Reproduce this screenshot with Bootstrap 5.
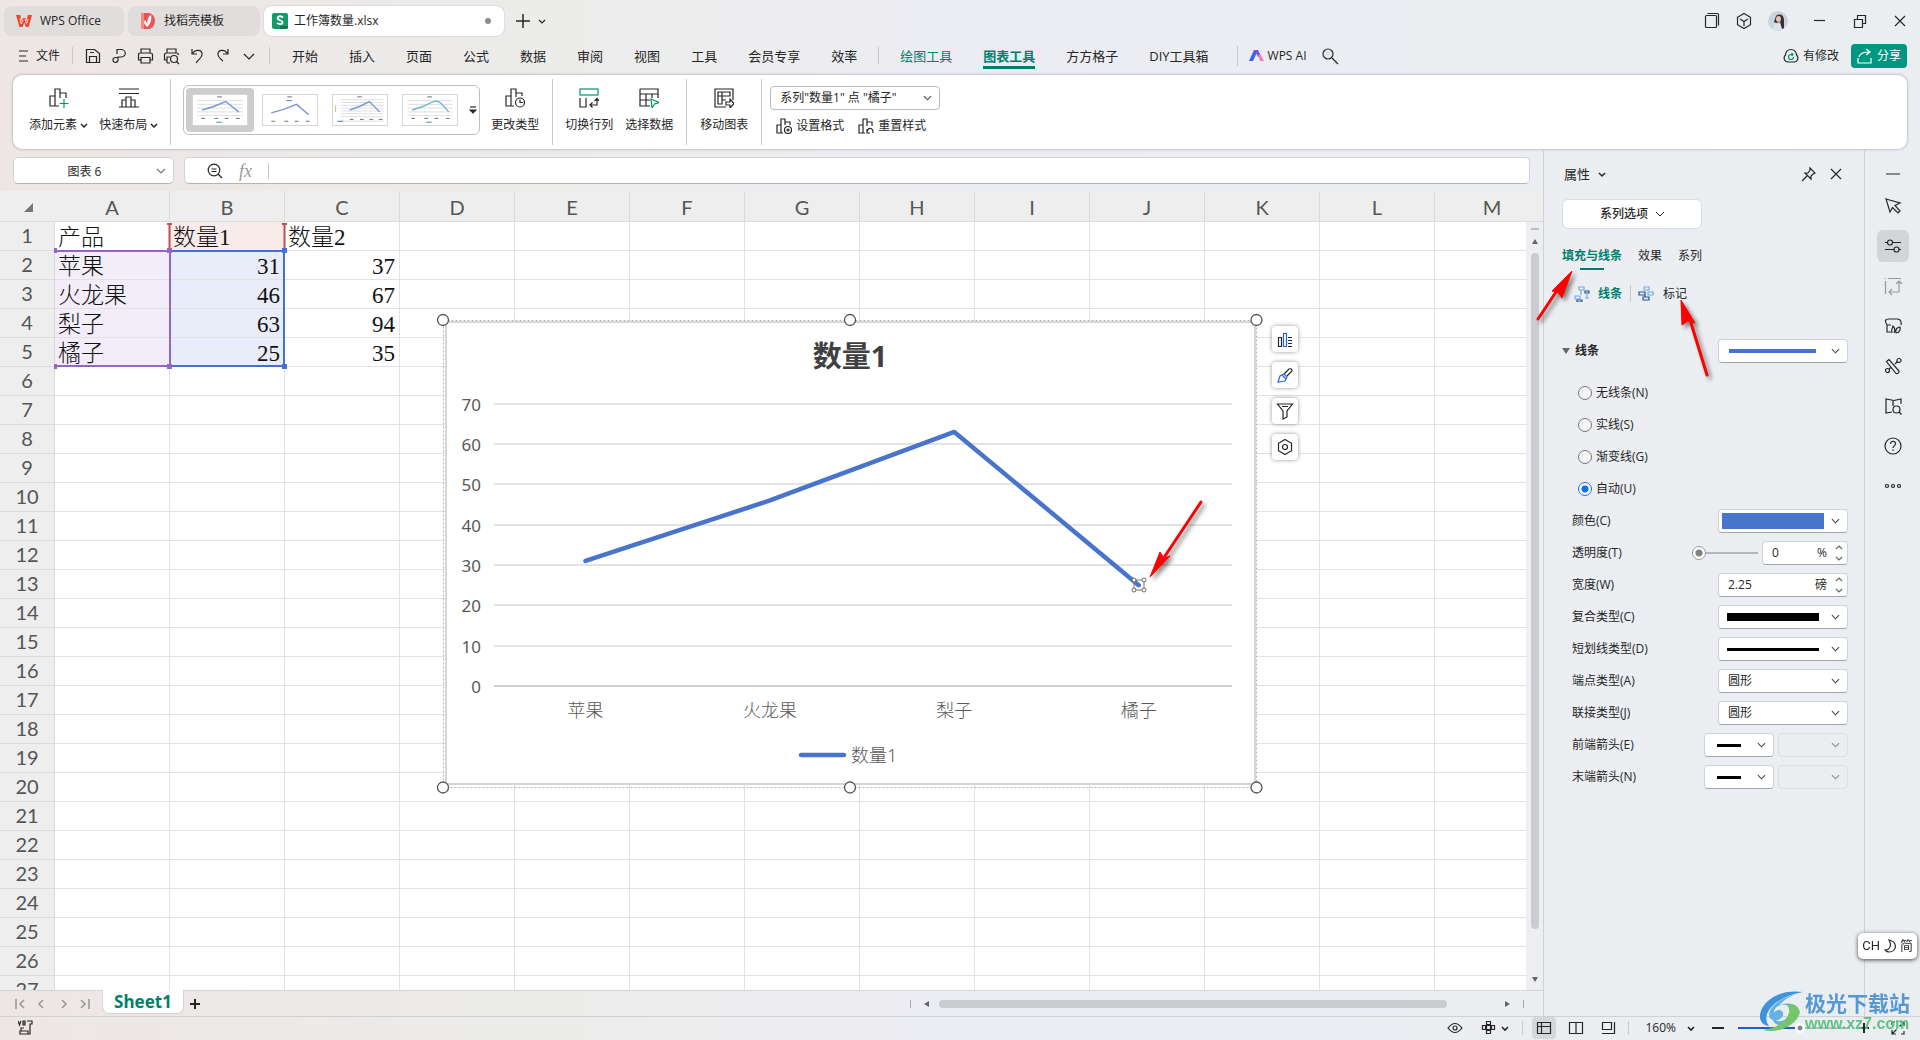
<!DOCTYPE html>
<html lang="zh-CN">
<head>
<meta charset="utf-8">
<meta name="viewport" content="width=device-width, initial-scale=1">
<title>工作簿数量.xlsx - WPS Office</title>
<link rel="stylesheet" href="https://cdn.jsdelivr.net/npm/bootstrap@5.3.0/dist/css/bootstrap.min.css">
<style>
:root{--teal:#007f6d;--blue:#4874cb;--ink:#262626;--line:#cfd1d5}
html{overflow:hidden}
body{font-family:"Open Sans","Noto Sans CJK SC",sans-serif;font-size:12px;line-height:16px;color:var(--ink);
 background:linear-gradient(90deg,#ede6e5 0,#ececea 28%,#ecedf3 50%,#ebeef1 100%)}
button,select,input{font:inherit;color:inherit}
.plain{border:0;background:none;padding:0}
a{color:inherit;text-decoration:none}
svg.ic{width:20px;height:20px;fill:none;stroke:currentColor;stroke-width:1.2;flex:none;display:block}
svg.sm{width:16px;height:16px}
svg.tiny{width:8px;height:8px}
.g{stroke:#00936f}
.titlebar{height:41px;padding-left:4px}
.doctab{height:30px;border-radius:8px;background:#e0dddc;padding:0 12px;gap:8px}
.doctab.on{background:#fff;box-shadow:0 0 2px #bbb}
.menurow{height:34px;padding:0 13px 5px 18px}
.vsep{width:1px;background:#c9c9cc;flex:none}
.menu a{font-size:13px;line-height:20px}
.menu a.cur{color:var(--teal);font-weight:700;box-shadow:0 3px 0 var(--teal)}
.ribbon{height:74px;margin:0 13px;background:#fff;border-radius:9px;box-shadow:0 0 3px #9a9a9f;padding:4px 0}
.rb{display:flex;flex-direction:column;align-items:center;gap:9px;padding-top:9px;white-space:nowrap}
.gallery{border:1px solid #bfbfbf;border-radius:6px;height:50px;margin-top:6px;padding:2px}
.thumb{width:68px;height:44px;border-radius:4px;padding:6px;margin-right:2px}
.thumb.on{background:#cdcdcd}
.thumb svg{width:56px;height:32px;display:block;background:#fff;border:1px solid #d5d5d5}
.ctl{background:#fff;border:1px solid #cfd1d4;border-bottom-color:#a2a4a8;border-radius:4px;height:24px}
select.ctl{appearance:none;padding:0 22px 0 9px;outline:0;
 --chev:url("data:image/svg+xml,%3Csvg xmlns='http://www.w3.org/2000/svg' viewBox='0 0 10 6'%3E%3Cpath d='M1 1l4 4 4-4' fill='none' stroke='%23444' stroke-width='1.200'/%3E%3C/svg%3E");
 background-image:var(--chev);background-repeat:no-repeat;background-position:right 7px center;background-size:9px 6px;width:130px}
select.bar{background-image:var(--chev),linear-gradient(var(--c),var(--c));background-position:right 7px center,var(--x) center;background-size:9px 6px,var(--s)}
select.half{width:70px}
select.ctl:disabled{background-color:#ebedf0;border-color:#d3d5d8;opacity:.6}
.fbar{height:42px;padding:8px 13px 7px}
.fbox{height:27px;background:#fff;border:1px solid #d3d3d5;border-bottom-color:#b3b3b5;border-radius:5px}
.sheet{min-width:0;background:#fff}
.grid{table-layout:fixed;width:1550px;border-collapse:separate;border-spacing:0}
.grid th{background:#eee;color:#555;font:400 20px/24px Lato,sans-serif;text-align:center;padding:0 0 3px;border:solid #dcdcdc;border-width:0 1px 1px 0;height:29px}
.grid thead th{height:31px;line-height:28px;padding:2px 0 0}
.grid td{height:29px;padding:3px 4px 0 3px;border:solid #e2e2e2;border-width:0 1px 1px 0;font:300 23px/25px "Liberation Serif","Noto Sans CJK SC",serif;color:#111;white-space:nowrap}
.grid .p{background:#f2edf8}.grid .b{background:#e8edf9}.grid .r{background:#f8ebea}
.grid .num{text-align:right}
.over{position:absolute;overflow:visible;pointer-events:none}
.chart{position:absolute;left:436px;top:122px}
.chart text{font-family:"Noto Sans","Noto Sans CJK SC",sans-serif;font-size:17px;fill:#595959}
.chart .cat{font-size:18px;font-weight:300}
.sidebtns{position:absolute;left:1272px;top:135px;gap:10px}
.sidebtns button{width:26px;height:26px;border:0;border-radius:4px;background:#fff;box-shadow:0 0 4px #999;padding:3px}
.vscroll{width:17px;background:#eceef2}
.vscroll .cap{height:31px;background:#eee;border-bottom:1px solid #dcdcdc}
.tabbar{height:26px;border-top:1px solid #d4d5d8}
.sheettab{width:82px;height:24px;margin-top:-1px;background:#fff;border:1px solid #d4d4d6;border-top:0;border-radius:0 0 7px 7px;color:var(--teal);font:700 17px/24px "Noto Sans",sans-serif}
.thumbbar{background:#cbccd0;border-radius:4px}
.status{height:24px;border-top:1px solid var(--line);padding:0 14px 2px}
.pane{width:321px;flex:none;border-left:1px solid var(--line);padding:0 16px 0 18px}
.strip{width:56px;flex:none;border-left:1px solid var(--line)}
.strip button{width:32px;height:32px;border-radius:6px;padding:6px;margin-bottom:8px}
.strip .on{background:#d2d5d8}
.ptabs{gap:16px;height:24px}
.ptabs .on,.teal{color:var(--teal);font-weight:700}
.ptabs .on::after{content:"";display:block;width:24px;height:2px;background:var(--teal);margin:4px auto 0}
.prow{height:32px;padding-left:10px}
.rad{appearance:none;width:14px;height:14px;border:1px solid #777;border-radius:50%;margin:0 4px 0 0;background:#f4f5f7}
.rad:checked{border:1px solid #0d6efd;background:radial-gradient(circle,#0d6efd 3px,#fff 4px)}
.spin input{border:0;outline:0;background:none;padding:0;width:60px}
.rng{appearance:none;height:14px;margin:0;background:linear-gradient(#b3b5b8,#b3b5b8) center/100% 2px no-repeat}
.rng::-webkit-slider-thumb{appearance:none;width:14px;height:14px;border-radius:50%;border:1px solid #999;background:radial-gradient(circle,#808080 3px,#fff 4px)}
.zoomr{width:112px;background:linear-gradient(90deg,#1e5fc8 56%,#b9bbbf 56%) center/100% 2px no-repeat}
.zoomr::-webkit-slider-thumb{width:10px;height:10px;border:0;background:radial-gradient(circle,#888 2px,#fff 3px)}
.ime{position:fixed;right:3px;bottom:81px;height:26px;padding:0 4px;background:#fff;border-radius:5px;box-shadow:0 1px 4px #444;font:13px/26px Roboto,"Noto Sans CJK SC",sans-serif}
.wmark{position:fixed;right:10px;bottom:7px;pointer-events:none;z-index:5}
.wmark .cn{font:700 21px/26px "Noto Sans CJK SC",sans-serif;color:#5598d6}
.wmark .en{font:700 16px/18px "Liberation Sans",sans-serif;color:#5ec584}
</style>
<script src="https://cdn.jsdelivr.net/npm/bootstrap@5.3.0/dist/js/bootstrap.bundle.min.js"></script>
</head>
<body>
<div class="d-flex flex-column vh-100 overflow-hidden">

<header class="titlebar d-flex align-items-center flex-shrink-0">
 <button class="plain doctab d-flex align-items-center me-1" style="width:120px"><svg class="ic sm" viewBox="0 0 16 16" style="stroke:none"><path d="M0 2h4.400l1 6 2-3h2l1 3 1.500-6H16l-3.400 12H10L8.300 9.500 6.500 14H3.500z" fill="#f0432c"/><path d="M4 5l1.200 6 2-4M9 6l1.600 4.500L12 6" fill="none" stroke="#fff" stroke-width=".8"/></svg>WPS Office</button>
 <button class="plain doctab d-flex align-items-center me-1" style="width:132px"><svg class="ic sm" viewBox="0 0 16 16" style="stroke:none"><path d="M1 0h7a7 8 0 0 1 0 16H1z" fill="#ee5354"/><path d="M1 0h3v16H1z" fill="#f58a85"/><path d="M7.500 14C3 11 4 8 5 7l2.500 4C7 6 9 3 11 2c1 4 0 8-3.500 12z" fill="#fff"/></svg>找稻壳模板</button>
 <button class="plain doctab on d-flex align-items-center" style="width:240px;padding:0 12px 0 8px;gap:6px"><svg class="ic sm" viewBox="0 0 16 16" style="stroke:none"><rect width="16" height="16" rx="2" fill="#109c68"/><path d="M8 13h8v1a2 2 0 0 1-2 2H8z" fill="#0b7a4e"/><path d="M11 4.500C9 2.500 5.500 3 5.600 5.400c.1 2.300 5 1.600 5 3.900 0 2.200-3.500 2.500-5.600.6" fill="none" stroke="#fff" stroke-width="1.800"/></svg>工作簿数量.xlsx<svg class="ms-auto tiny" viewBox="0 0 8 8"><circle cx="4" cy="4" r="3" fill="#8b8b8b"/></svg></button>
 <button class="plain ms-2 ps-1" aria-label="新建"><svg class="ic" style="width:14px;height:14px;stroke-width:1.500" viewBox="0 0 14 14"><path d="M7 0v14M0 7h14"/></svg></button>
 <button class="plain ms-2" aria-label="标签列表"><svg class="ic tiny" viewBox="0 0 8 8"><path d="M1 3l3 3 3-3"/></svg></button>
 <div class="d-flex align-items-center ms-auto" style="padding-right:12px">
  <button class="plain" aria-label="窗口"><svg class="ic" viewBox="0 0 20 20"><path d="M4.500 4.500h9q1 0 1 1v10q0 1-1 1h-9q-1 0-1-1v-10q0-1 1-1zM5.500 2.500h10q1 0 1 1v11"/></svg></button>
  <button class="plain" style="margin:0 14px 0 12px" aria-label="应用"><svg class="ic" viewBox="0 0 20 20"><path d="M10 2.500l6.500 3.800v7.400L10 17.500l-6.500-3.800V6.300zM6 8l4 2.500L14 8M10 10.500V15"/></svg></button>
  <svg class="ic" viewBox="0 0 20 20" style="stroke:none"><circle cx="10" cy="10" r="10" fill="#c9d5da"/><path d="M8 5c4-3 8-1 8 4l0 8-2 1-2-7-4 1-2-1z" fill="#3a2d37"/><ellipse cx="10.500" cy="8" rx="2.500" ry="3" fill="#e6bfb2"/><path d="M4 19l3-7 5 1 2 6z" fill="#dbe6ea"/></svg>
  <button class="plain" style="margin:0 22px 0 24px" aria-label="最小化"><svg class="ic sm" viewBox="0 0 16 16"><path d="M2 7.500h11"/></svg></button>
  <button class="plain" aria-label="还原"><svg class="ic" viewBox="0 0 20 20"><path d="M4.500 8.500h8v8h-8zM7.500 8V4.500h8v8h-3"/></svg></button>
  <button class="plain" style="margin-left:22px" aria-label="关闭"><svg class="ic sm" viewBox="0 0 16 16"><path d="M3 3l10 10M13 3L3 13"/></svg></button>
 </div>
</header>

<nav class="menurow d-flex align-items-center flex-shrink-0">
 <button class="plain d-flex align-items-center gap-2"><svg class="ic" style="width:10px;height:12px" viewBox="0 0 10 12"><path d="M1 1h9M1 6h7M1 11h9"/></svg>文件</button>
 <span class="vsep" style="height:17px;margin:0 10px 0 12px"></span>
 <div class="d-flex" style="gap:6px">
  <button class="plain" aria-label="保存"><svg class="ic" viewBox="0 0 20 20"><path d="M3.500 3.500h8l5 4v9h-13zM6.500 16v-5.500h7V16M7 6.500h4"/></svg></button>
  <button class="plain" aria-label="输出PDF"><svg class="ic" viewBox="0 0 20 20"><path d="M8 8V3.500h4a4 3.500 0 0 1 0 7.500H9V14a2.500 2.500 0 1 1-3-2.500h3"/></svg></button>
  <button class="plain" aria-label="打印"><svg class="ic" viewBox="0 0 20 20"><path d="M6 7V3h9v4M6 14H3.500V9q0-2 2-2h10q2 0 2 2v5H15M6 11.500h9V17H6z"/></svg></button>
  <button class="plain" aria-label="打印预览"><svg class="ic" viewBox="0 0 20 20"><path d="M6 7V3h9v4M6 14H3.500V9q0-2 2-2h10q2 0 2 2M6 17v-6h3M6 17h3"/><circle cx="13" cy="13" r="3.500"/><path d="M15.500 15.500L18 18"/></svg></button>
  <button class="plain" aria-label="撤销"><svg class="ic" viewBox="0 0 20 20"><path d="M5 3v5h5M5 8c4-6 11-4 10 1-.5 3-4 5-6 8"/></svg></button>
  <button class="plain" aria-label="恢复"><svg class="ic" viewBox="0 0 20 20"><path d="M15 3v5h-5M15 8C11 2 4 4 5 9c.5 3 3 4 5 6"/></svg></button>
  <button class="plain" aria-label="更多"><svg class="ic" viewBox="0 0 20 20"><path d="M5 8l5 5 5-5"/></svg></button>
 </div>
 <span class="vsep" style="height:17px;margin:0 22px 0 10px"></span>
 <div class="menu d-flex align-items-center" style="gap:31px">
  <a href="#">开始</a><a href="#">插入</a><a href="#">页面</a><a href="#">公式</a><a href="#">数据</a><a href="#">审阅</a><a href="#">视图</a><a href="#">工具</a><a href="#">会员专享</a><a href="#">效率</a>
 </div>
 <span class="vsep" style="height:17px;margin:0 21px"></span>
 <div class="menu d-flex align-items-center" style="gap:31px">
  <a href="#" style="color:var(--teal)">绘图工具</a><a href="#" class="cur">图表工具</a><a href="#">方方格子</a><a href="#">DIY工具箱</a>
 </div>
 <span class="vsep" style="height:20px;margin:0 10px 0 28px"></span>
 <button class="plain d-flex align-items-center gap-1"><svg class="ic sm" viewBox="0 0 16 16" style="stroke:none"><path d="M6 2h4L5 13H1z" fill="#3c62f4"/><path d="M6 2h4l3 6-3 1-2-4z" fill="#7b4df0"/><path d="M10 7l3 0 3 6h-4z" fill="#f77bb5"/></svg>WPS AI</button>
 <button class="plain" style="margin-left:13px" aria-label="搜索"><svg class="ic" viewBox="0 0 20 20"><circle cx="8" cy="8" r="5"/><path d="M12 12l6 6"/></svg></button>
 <button class="plain d-flex align-items-center gap-1 ms-auto me-2"><svg class="ic sm" viewBox="0 0 16 16"><path d="M5 14a4 4 0 0 1-2.500-7A5.500 5.500 0 0 1 13.500 7 4 4 0 0 1 11 14z"/><path class="g" d="M10.500 9A2.500 2.500 0 1 1 8 6.500h2M8.500 5L10 6.500 8.500 8"/></svg>有修改</button>
 <button class="plain d-flex align-items-center gap-1 text-white ms-1" style="background:#009781;border-radius:4px;height:24px;width:56px;padding:0 6px"><svg class="ic sm" viewBox="0 0 16 16"><path d="M2 9c1-4 4-5 10-5M9 1l4 3-4 3M1 10v5h13v-5"/></svg>分享</button>
</nav>

<section class="ribbon d-flex flex-shrink-0">
 <button class="plain rb" style="margin-left:16px"><svg class="ic" viewBox="0 0 20 20"><path d="M1 18V8h5v10zM6 8V1h5v9M11 5h6v5M6 18h4"/><path class="g" d="M15 11v9M10.500 15.500h9"/></svg><span>添加元素 <svg class="ic tiny d-inline" viewBox="0 0 8 8" style="stroke-width:1.500"><path d="M1 2l3 3 3-3"/></svg></span></button>
 <button class="plain rb" style="margin-left:11px"><svg class="ic" viewBox="0 0 20 20"><path d="M0 1h20M0 5.500h20M0 19h20M3 19v-7h4v7M7 15V9h5v10M12 12h4v7"/></svg><span>快速布局 <svg class="ic tiny d-inline" viewBox="0 0 8 8" style="stroke-width:1.500"><path d="M1 2l3 3 3-3"/></svg></span></button>
 <span class="vsep" style="margin:0 12px"></span>
 <div class="gallery d-flex">
  <button class="plain thumb on" aria-label="样式 1"><svg viewBox="0 0 56 32"><path d="M4 6h48M4 10h48M4 14h48M4 18h48M4 22h48" stroke="#ddd"/><path d="M9 16l13-4 12-5 14 11" fill="none" stroke="#7b96d8" stroke-width="1.500"/><path d="M25 2h5M8 25h4M22 25h4M33 25h4M45 25h4" stroke="#666"/><path d="M24 29h6" stroke="#4874cb"/></svg></button>
  <button class="plain thumb" aria-label="样式 2"><svg viewBox="0 0 56 32"><path d="M8 19l14-4 13-5 13 11" fill="none" stroke="#7b96d8" stroke-width="1.500"/><path d="M25 2h5M8 28h4M22 28h4M33 28h4M45 28h4" stroke="#666"/><path d="M24 6h6" stroke="#4874cb"/></svg></button>
  <button class="plain thumb" aria-label="样式 3"><svg viewBox="0 0 56 32"><path d="M8 5h45M8 8h45M8 11h45M8 14h45M8 17h45M8 20h45M8 23h45M3 28h50" stroke="#ddd"/><path d="M17 16l11-4 10-5 11 11" fill="none" stroke="#7b96d8" stroke-width="1.500"/><path d="M25 2h5M17 26h4M28 26h4M38 26h4M48 26h4" stroke="#666"/><path d="M2 11v7" stroke="#ca8"/><path d="M4 28h6" stroke="#4874cb"/></svg></button>
  <button class="plain thumb" aria-label="样式 4"><svg viewBox="0 0 56 32"><path d="M4 6h48M4 10h48M4 14h48M4 18h48M4 22h48" stroke="#ddd"/><path d="M9 16l12-4C30 8 34 4 40 9l8 9" fill="none" stroke="#73b5d4" stroke-width="1.500"/><path d="M25 2h5M8 25h4M22 25h4M33 25h4M45 25h4" stroke="#666"/><path d="M24 29h6" stroke="#4874cb"/></svg></button>
  <button class="plain" style="margin-left:3px" aria-label="更多样式"><svg class="ic tiny" viewBox="0 0 8 8"><path d="M1 1h6"/><path d="M1 4h6L4 7z" fill="#333"/></svg></button>
 </div>
 <button class="plain rb" style="margin-left:11px"><svg class="ic" viewBox="0 0 20 20"><path d="M1 18V8h5v10zM6 8V1h5v8M11 5h6v3M6 18h3"/><circle cx="15" cy="14.500" r="4.500"/><path d="M15 11.500v3h3"/></svg>更改类型</button>
 <span class="vsep" style="margin:0 12px 0 13px"></span>
 <button class="plain rb"><svg class="ic" viewBox="0 0 20 20"><rect class="g" x="1" y="1" width="18" height="6"/><path d="M1 10v9h6v-9M11 17h7v-6M13.500 14.500L11 17l2.500 2.500M15.500 13L18 10.500l2 2.500"/></svg>切换行列</button>
 <button class="plain rb" style="margin-left:12px"><svg class="ic" viewBox="0 0 20 20"><path d="M1 1h18v9M1 1v17h10M1 6h18M1 12h10M7 6v12M13 6v4"/><path class="g" d="M12 11l8 3.500-4.500 1.500L13 20z"/></svg>选择数据</button>
 <span class="vsep" style="margin:0 13px"></span>
 <button class="plain rb"><svg class="ic" viewBox="0 0 20 20"><path d="M19 12V1H1v18h11M4 4h12v4H8v8H4zM8 4v4H4M8 12h4"/><path d="M12 14h4v-3l4 4.500-4 4.500v-3h-4z"/></svg>移动图表</button>
 <span class="vsep" style="margin:0 8px 0 13px"></span>
 <div class="d-flex flex-column" style="padding-top:7px;gap:8px">
  <select class="ctl" style="width:170px;border-color:#bbb" aria-label="图表元素"><option>系列"数量1" 点 "橘子"</option></select>
  <div class="d-flex" style="gap:14px;padding-left:6px">
   <button class="plain d-flex align-items-center gap-1"><svg class="ic sm" viewBox="0 0 16 16"><path d="M1 15V7h4v8zM5 7V1h4v6M9 4h5v3M5 15h2"/><circle cx="12" cy="12" r="3.500"/><circle cx="12" cy="12" r="1"/></svg>设置格式</button>
   <button class="plain d-flex align-items-center gap-1"><svg class="ic sm" viewBox="0 0 16 16"><path d="M1 15V7h4v8zM5 7V1h4v7M9 4h5v4M5 15h2M9 14c1-5 6-5 6 1M9 11v4h3"/></svg>重置样式</button>
  </div>
 </div>
</section>

<main class="d-flex flex-grow-1" style="min-height:0">
 <div class="d-flex flex-column flex-grow-1" style="min-width:0">
  <div class="fbar d-flex flex-shrink-0" style="gap:10px">
   <div class="fbox position-relative flex-shrink-0" style="width:161px"><input aria-label="名称框" class="plain w-100 h-100 text-center" style="padding-right:18px" value="图表 6"><svg class="ic tiny over" style="right:7px;top:9px;width:10px" viewBox="0 0 10 8"><path d="M1 2l4 4 4-4" stroke="#777"/></svg></div>
   <div class="fbox d-flex align-items-center flex-grow-1" style="padding-left:22px;gap:16px"><svg class="ic sm" viewBox="0 0 16 16"><circle cx="7" cy="7" r="5.800"/><path d="M11 11l4 4M4.500 6h5M4.500 8.500h5"/></svg><i style="color:#999;font:italic 18px/20px 'Liberation Serif',serif">fx</i><span class="vsep" style="height:16px"></span><input class="plain flex-grow-1" aria-label="编辑栏"></div>
  </div>
  <div class="d-flex flex-grow-1" style="min-height:0">
   <div class="sheet position-relative overflow-hidden flex-grow-1">
    <table class="grid" id="grid"><colgroup><col style="width:55px"></colgroup><thead></thead><tbody></tbody></table>
    <svg class="over" style="left:0;top:0" width="420" height="200" fill="none" stroke-width="2">
     <path d="M24 21l9-9v9z" fill="#777"/>
     <g stroke="#c0504d"><path d="M169.500 59V32M284.500 59V32M167 33h5M282 33h5"/></g>
     <path d="M172 60h112v115H172" stroke="#4470d2"/><path d="M55 60h115v115H55" stroke="#9565c0"/>
     <path d="M54 57h3v5h-3zM54 173h3v5h-3zM167 57h5v5h-5zM167 173h5v5h-5z" fill="#9565c0"/><path d="M282 57h5v5h-5zM282 173h5v5h-5z" fill="#4470d2"/>
    </svg>
    <svg class="chart" width="828" height="484" role="img" aria-label="数量1 折线图">
     <rect x="10" y="9" width="809" height="462" fill="#fff" stroke="#d5d5d5" stroke-width="2"/>
     <rect x="7.500" y="7.500" width="813" height="467" fill="none" stroke="#b5b5b5" stroke-dasharray="2 2"/>
     <g id="plot"></g>
     <text x="414" y="54" text-anchor="middle" style="font-size:29px;font-weight:700;fill:#404040">数量1</text>
     <path d="M365 442h43" stroke="#4874cb" stroke-width="4.500" stroke-linecap="round"/><text x="415" y="449" class="cat">数量1</text>
     <g fill="#fff" stroke="#555" stroke-width="1.300"><circle cx="7" cy="7" r="5.500"/><circle cx="414" cy="7" r="5.500"/><circle cx="820.500" cy="7" r="5.500"/><circle cx="7" cy="474.500" r="5.500"/><circle cx="414" cy="474.500" r="5.500"/><circle cx="820.500" cy="474.500" r="5.500"/></g>
     <rect x="698" y="267" width="10" height="10" fill="none" stroke="#777"/><g fill="#fff" stroke="#666"><circle cx="698" cy="267" r="2"/><circle cx="708" cy="267" r="2"/><circle cx="698" cy="277" r="2"/><circle cx="708" cy="277" r="2"/></g>
     <g style="filter:drop-shadow(3px 3px 2px #0007)"><path d="M765 189L729 243" stroke="#f00" stroke-width="3" stroke-linecap="round"/><path d="M714 264L724 239 728 245 734 243z" fill="#f00" stroke="#f00"/></g>
    </svg>
    <div class="sidebtns d-flex flex-column">
     <button aria-label="图表元素"><svg class="ic" viewBox="0 0 20 20"><path d="M3.500 8.500h3v9h-3zM13 8.500h4M13 11.500h4M13 14.500h4M13 17.500h4"/><path d="M8.500 4.500h3v13h-3z" stroke="#2563eb"/></svg></button>
     <button aria-label="图表样式"><svg class="ic" viewBox="0 0 20 20"><path d="M9 9l5-5q3-1 3 2l-5 5"/><path d="M9 9l3 3-2 4-7 1 2-6zM7 10l4 4" stroke="#2563eb"/></svg></button>
     <button aria-label="筛选"><svg class="ic" viewBox="0 0 20 20"><path d="M2.500 3h15L12 10v6l-4 2v-8zM7 5.500h6"/></svg></button>
     <button aria-label="设置"><svg class="ic" viewBox="0 0 20 20"><path d="M10 2.500l6.500 3.800v7.400L10 17.500l-6.500-3.800V6.300z"/><circle cx="10" cy="10" r="2.500"/></svg></button>
    </div>
   </div>
   <div class="vscroll d-flex flex-column align-items-center flex-shrink-0">
    <div class="cap w-100"></div>
    <div style="width:8px;height:2px;background:#bbb;margin:6px 0 8px"></div>
    <svg class="tiny" viewBox="0 0 8 8"><path d="M1 6h6L4 1z" fill="#666"/></svg>
    <div class="thumbbar" style="width:8px;margin-top:7px;flex:676 0 0"></div><div style="flex:46 0 0"></div>
    <svg class="tiny" style="margin-bottom:7px" viewBox="0 0 8 8"><path d="M1 2h6L4 7z" fill="#666"/></svg>
   </div>
  </div>
  <div class="tabbar d-flex align-items-center flex-shrink-0">
   <div class="d-flex" style="padding-left:14px;gap:10px;width:102px;color:#999">
    <button class="plain" aria-label="第一个"><svg class="ic" style="width:12px;height:12px;stroke-width:1.600" viewBox="0 0 12 12"><path d="M2 1v10M10 2L6 6l4 4"/></svg></button>
    <button class="plain" aria-label="上一个"><svg class="ic" style="width:12px;height:12px;stroke-width:1.600" viewBox="0 0 12 12"><path d="M7 2L3 6l4 4"/></svg></button>
    <button class="plain" aria-label="下一个"><svg class="ic" style="width:12px;height:12px;stroke-width:1.600" viewBox="0 0 12 12"><path d="M4 2l4 4-4 4"/></svg></button>
    <button class="plain" aria-label="最后一个"><svg class="ic" style="width:12px;height:12px;stroke-width:1.600" viewBox="0 0 12 12"><path d="M1 2l4 4-4 4M9 1v10"/></svg></button>
   </div>
   <button class="plain sheettab align-self-start">Sheet1</button>
   <button class="plain" style="margin-left:6px" aria-label="新建工作表"><svg class="ic" style="width:10px;height:10px;stroke-width:2" viewBox="0 0 10 10"><path d="M5 0v10M0 5h10"/></svg></button>
   <div class="d-flex align-items-center ms-auto" style="width:41%;gap:12px;padding-right:19px">
    <span class="vsep" style="height:8px;background:#aaa"></span><svg class="tiny" viewBox="0 0 8 8"><path d="M6 1v6L1 4z" fill="#666"/></svg>
    <div class="thumbbar" style="height:8px;margin-left:-4px;flex:507 0 0"></div><div style="flex:32 0 0"></div>
    <svg class="tiny" viewBox="0 0 8 8"><path d="M2 1v6l5-3z" fill="#666"/></svg><span class="vsep" style="height:8px;background:#aaa"></span>
   </div>
  </div>
 </div>

 <aside class="pane position-relative">
  <div class="d-flex align-items-center gap-2" style="height:50px;font-size:13px;padding-left:2px"><span>属性</span><svg class="ic tiny" viewBox="0 0 8 8" style="stroke-width:1.500"><path d="M1 3l3 3 3-3"/></svg>
   <button class="plain ms-auto" aria-label="固定"><svg class="ic sm" viewBox="0 0 16 16"><path d="M9 2l5 5-2 1-2 2v3L4 7h3l2-3zM6 10l-5 5"/></svg></button><button class="plain" style="margin:0 4px 0 3px" aria-label="关闭窗格"><svg class="ic sm" viewBox="0 0 16 16"><path d="M3 3l10 10M13 3L3 13"/></svg></button></div>
  <button class="plain d-flex align-items-center justify-content-center gap-2" style="width:140px;height:30px;background:#fff;border:1px solid #d9dce0;border-radius:6px;margin-bottom:19px;font-weight:500">系列选项 <svg class="ic tiny" viewBox="0 0 8 8" style="stroke-width:1"><path d="M0 2l4 4 4-4"/></svg></button>
  <div class="ptabs d-flex"><a href="#" class="on">填充与线条</a><a href="#">效果</a><a href="#">系列</a></div>
  <div class="d-flex align-items-center gap-2" style="height:27px;padding-left:12px;margin-bottom:28px;margin-top:8px">
   <svg class="ic sm" viewBox="0 0 16 16"><path d="M5 1h5v3H5zM7 4v5M1 10h5v3H1z" stroke="#79a9ec"/><path d="M11 5h4v2h-4zM3 14h5v2H3z" stroke="#1f5a96"/><path d="M11 12h4M13 8v4" stroke="#79a9ec"/></svg><a href="#" class="teal">线条</a><span class="vsep" style="height:17px"></span>
   <svg class="ic sm" style="margin-left:-1px" viewBox="0 0 16 16"><path d="M6 1h5v3H6zM10 6h5v3h-5z" stroke="#79a9ec"/><path d="M1 6h6v3H1zM5 11h6v3H5zM7 9v2" stroke="#1f5a96"/></svg><a href="#" style="padding-left:1px">标记</a>
  </div>
  <div class="d-flex align-items-center" style="height:32px;gap:5px;margin-bottom:10px"><svg class="tiny" viewBox="0 0 8 8"><path d="M0 1h8L4 7z" fill="#666"/></svg><b>线条</b><select class="ctl bar ms-auto" aria-label="线条样式" style="--c:#4874cb;--x:10px;--s:87px 4px"><option></option></select></div>
  <label class="prow d-flex align-items-center" style="padding-left:16px"><input class="rad" type="radio" name="ln">无线条(N)</label>
  <label class="prow d-flex align-items-center" style="padding-left:16px"><input class="rad" type="radio" name="ln">实线(S)</label>
  <label class="prow d-flex align-items-center" style="padding-left:16px"><input class="rad" type="radio" name="ln">渐变线(G)</label>
  <label class="prow d-flex align-items-center" style="padding-left:16px"><input class="rad" type="radio" name="ln" checked>自动(U)</label>
  <div class="prow d-flex align-items-center justify-content-between"><label for="c1">颜色(C)</label><select id="c1" class="ctl bar" style="--c:#4874cb;--x:3px;--s:102px 16px"><option></option></select></div>
  <div class="prow d-flex align-items-center"><label for="c2" class="me-auto">透明度(T)</label><input type="range" class="rng" style="width:66px;margin-right:4px" value="0" aria-label="透明度"><span class="ctl spin d-flex align-items-center" style="width:86px;padding:0 4px 0 9px"><input id="c2" value="0" style="width:36px"><span class="ms-auto me-2">%</span><svg class="ic" style="width:8px;height:18px" viewBox="0 0 8 18"><path d="M1 5l3-3 3 3M1 13l3 3 3-3" stroke="#666"/></svg></span></div>
  <div class="prow d-flex align-items-center justify-content-between"><label for="c3">宽度(W)</label><span class="ctl spin d-flex align-items-center" style="width:130px;padding:0 4px 0 9px"><input id="c3" value="2.25"><span class="ms-auto me-2">磅</span><svg class="ic" style="width:8px;height:18px" viewBox="0 0 8 18"><path d="M1 5l3-3 3 3M1 13l3 3 3-3" stroke="#666"/></svg></span></div>
  <div class="prow d-flex align-items-center justify-content-between"><label for="c4">复合类型(C)</label><select id="c4" class="ctl bar" style="--c:#000;--x:8px;--s:92px 8px"><option></option></select></div>
  <div class="prow d-flex align-items-center justify-content-between"><label for="c5">短划线类型(D)</label><select id="c5" class="ctl bar" style="--c:#000;--x:8px;--s:92px 3px"><option></option></select></div>
  <div class="prow d-flex align-items-center justify-content-between"><label for="c6">端点类型(A)</label><select id="c6" class="ctl"><option>圆形</option></select></div>
  <div class="prow d-flex align-items-center justify-content-between"><label for="c7">联接类型(J)</label><select id="c7" class="ctl"><option>圆形</option></select></div>
  <div class="prow d-flex align-items-center gap-1"><label for="c8" class="me-auto">前端箭头(E)</label><select id="c8" class="ctl bar half" style="--c:#000;--x:12px;--s:24px 3px"><option></option></select><select class="ctl half" disabled aria-label="前端箭头大小"><option></option></select></div>
  <div class="prow d-flex align-items-center gap-1"><label for="c9" class="me-auto">末端箭头(N)</label><select id="c9" class="ctl bar half" style="--c:#000;--x:12px;--s:24px 3px"><option></option></select><select class="ctl half" disabled aria-label="末端箭头大小"><option></option></select></div>
  <svg class="over" style="left:-10px;top:110px;filter:drop-shadow(3px 3px 2px #0007)" width="180" height="130" fill="#f00" stroke="#f00"><path d="M4 60L22 33" stroke-width="3" stroke-linecap="round"/><path d="M38 12L18 32 24 33 28 39z"/><path d="M173 116L157 64" stroke-width="3" stroke-linecap="round"/><path d="M147 41L148 66 154 62 161 64z"/></svg>
 </aside>

 <nav class="strip d-flex flex-column align-items-center">
  <svg class="ic" style="height:41px;width:14px" viewBox="0 0 14 41"><path d="M0 25h14" stroke="#888" stroke-width="2"/></svg>
  <button class="plain" aria-label="选择"><svg class="ic" viewBox="0 0 20 20"><path d="M3 3l14 4-5 2.500 5 5.500-2 2-5.500-5.500L7 16z"/></svg></button>
  <button class="plain on" aria-label="属性"><svg class="ic" viewBox="0 0 20 20"><path d="M2 6.500h2.500M9.500 6.500H18M2 13.500h9M16 13.500h2"/><circle cx="7" cy="6.500" r="2.500"/><circle cx="13.500" cy="13.500" r="2.500"/></svg></button>
  <button class="plain" style="color:#999" aria-label="转置"><svg class="ic" viewBox="0 0 20 20"><path d="M2 2v1M5 2.500h13M2.500 5v13M7 16h9V6M9 13l-3 3 3 3M13 8l3-3 3 3"/></svg></button>
  <button class="plain" aria-label="分析"><svg class="ic" viewBox="0 0 20 20"><path d="M8 16H4V9Q0 3 6 3h9q4 1 3 6M4 9h4M9 17c-1-3 0-5 1-7 2 2 2 5 1 7M13 17c-1-3 1-6 4-6 1 3-1 6-4 6"/></svg></button>
  <button class="plain" aria-label="工具"><svg class="ic" viewBox="0 0 20 20"><path d="M3.500 5.500l2.500-2 10 11.500q0 3-3 2.500zM6 13l2-2M12 8l2.500-2.500"/><circle cx="4.500" cy="14.500" r="2"/><circle cx="16" cy="4.500" r="2"/></svg></button>
  <button class="plain" aria-label="查找"><svg class="ic" viewBox="0 0 20 20"><path d="M18 8V3l-7 1.500L3 3v14l6-1M10 5v5"/><circle cx="13.500" cy="13.500" r="3.500"/><path d="M16 16l2.500 2.500"/></svg></button>
  <button class="plain" aria-label="帮助"><svg class="ic" viewBox="0 0 20 20"><circle cx="10" cy="10" r="8"/><path d="M7.500 8c0-4 5.500-3 5 0-.3 1.500-2.500 2-2.500 4M10 13.500V15"/></svg></button>
  <button class="plain" aria-label="更多"><svg class="ic" viewBox="0 0 20 20"><circle cx="4" cy="10" r="1.500"/><circle cx="10" cy="10" r="1.500"/><circle cx="16" cy="10" r="1.500"/></svg></button>
 </nav>
</main>

<footer class="status d-flex align-items-center flex-shrink-0">
 <svg class="ic sm me-auto ms-1" viewBox="0 0 16 16"><path d="M0 1l1.500 4L3 1M5 1h2v4H5zM5 3h2M9 1h5v3h-2v10H2v-3h8v3M3 11V8h3"/></svg>
 <button class="plain" aria-label="护眼"><svg class="ic sm" viewBox="0 0 16 16"><path d="M1 8q7-9 14 0-7 9-14 0z"/><circle cx="8" cy="8" r="2"/></svg></button>
 <button class="plain d-flex align-items-center gap-1" style="margin-left:18px" aria-label="护眼模式"><svg class="ic sm" viewBox="0 0 16 16"><path d="M5.500 1.500h4v3h-4zM5.500 10.500h4v3h-4zM1.500 5.500h3v4h-3zM10.500 5.500h3v4h-3zM5.500 5.500h4v4h-4z"/></svg><svg class="ic tiny" viewBox="0 0 8 8" style="stroke-width:1.600"><path d="M1 3l3 3 3-3"/></svg></button>
 <span class="vsep" style="height:14px;margin:0 9px 0 13px"></span>
 <button class="plain rounded-1" style="background:#d5d8db;padding:3px 4px" aria-label="普通视图"><svg class="ic sm" viewBox="0 0 16 16"><path d="M1.500 2.500h13v11h-13zM1 6.500h13M5.500 2v12"/></svg></button>
 <button class="plain" style="margin:0 16px 0 12px" aria-label="分页预览"><svg class="ic sm" viewBox="0 0 16 16"><path d="M1.500 2.500h13v11h-13zM8 2v12"/></svg></button>
 <button class="plain" aria-label="阅读"><svg class="ic sm" viewBox="0 0 16 16"><path d="M2.500 2.500h9v7h-9zM14.500 2v11.500H2"/></svg></button>
 <span class="vsep" style="height:14px;margin:0 16px 0 12px"></span>
 <button class="plain d-flex align-items-center" style="gap:11px">160%<svg class="ic tiny" viewBox="0 0 8 8" style="stroke-width:1.600"><path d="M1 3l3 3 3-3"/></svg></button>
 <button class="plain" style="margin:0 14px 0 17px" aria-label="缩小"><svg class="ic" style="width:12px;height:12px;stroke-width:2" viewBox="0 0 12 12"><path d="M0 6h12"/></svg></button>
 <input type="range" class="rng zoomr" value="56" aria-label="缩放">
 <button class="plain" style="margin:0 20px 0 8px" aria-label="放大"><svg class="ic" style="width:12px;height:12px;stroke-width:2" viewBox="0 0 12 12"><path d="M6 1v10M1 6h10"/></svg></button>
 <button class="plain" aria-label="全屏"><svg class="ic sm" viewBox="0 0 16 16"><path d="M10 2h4v4M14 2L9.500 6.500M6 14H2v-4M2 14l4.500-4.500M2 5V2h3M14 11v3h-3"/></svg></button>
</footer>
</div>

<div class="ime d-flex align-items-center gap-1"><span>CH</span><svg class="ic" style="width:12px;height:14px" viewBox="0 0 12 14"><path d="M5 1c9 2 8 12 0 12-2 0-3-1-4-2 5 0 7-5 4-10z"/></svg><span>简</span></div>
<div class="wmark d-flex align-items-center"><svg width="46" height="42" viewBox="0 0 46 42"><path d="M44 2C18-2 0 14 1 28c1 6 6 8 9 8C2 26 12 8 44 2z" fill="#3f93d8"/><path d="M40 3C20 8 10 17 10 25c0 7 12 7 14 0 1-5-6-7-9-2 0-9 14-11 17-4-4 16-14 13-19 9 1 7 10 10 17 6C42 28 42 17 33 14c-6-1-10 0-13 2C25 9 33 5 40 3z" fill="#64b3e4"/><path d="M4 40c14 4 34-4 37-18C38 12 30 14 28 15c6 6 0 22-24 25z" fill="#74c56b"/></svg><div><div class="cn">极光下载站</div><div class="en">www.xz7.com</div></div></div>

<script>
// Worksheet: data rows first, then empty rows
const data=[['产品','数量1','数量2'],['苹果',31,37],['火龙果',46,67],['梨子',63,94],['橘子',25,35]];
const cols='ABCDEFGHIJKLM'.split('');
document.querySelector('#grid thead').innerHTML='<tr><th style="border-right-color:#eee"></th>'+cols.map(c=>`<th>${c}</th>`).join('')+'</tr>';
document.querySelector('#grid colgroup').innerHTML+='<col>'.repeat(13);
document.querySelector('#grid tbody').innerHTML=Array.from({length:27},(_,r)=>`<tr><th>${r+1}</th>`+cols.map((c,i)=>{
 const v=(data[r]||[])[i];
 const k=[typeof v==='number'?'num':'',r>0&&r<5?['p','b'][i]||'':r==0&&i==1?'r':''];
 return `<td class="${k.join(' ').trim()}">${v===undefined?'':v}</td>`}).join('')+'</tr>').join('');
// Line chart of the first series
const X=i=>149.5+i*184.4,Y=v=>373-v*4.033;let s='';
for(let v=0;v<=70;v+=10)s+=`<path d="M58 ${Math.round(Y(v))}H796" stroke="${v?'#e3e3e3':'#d0d0d0'}" stroke-width="2"/><text x="45" y="${Math.round(Y(v))+7}" text-anchor="end">${v}</text>`;
const rows=data.slice(1);
rows.forEach((d,i)=>s+=`<text class="cat" x="${X(i)}" y="404" text-anchor="middle">${d[0]}</text>`);
s+=`<polyline points="${rows.map((d,i)=>X(i)+','+Y(d[1])).join(' ')}" fill="none" stroke="#4874cb" stroke-width="4.500" stroke-linecap="round" stroke-linejoin="round"/>`;
document.getElementById('plot').innerHTML=s;
</script>
</body>
</html>
